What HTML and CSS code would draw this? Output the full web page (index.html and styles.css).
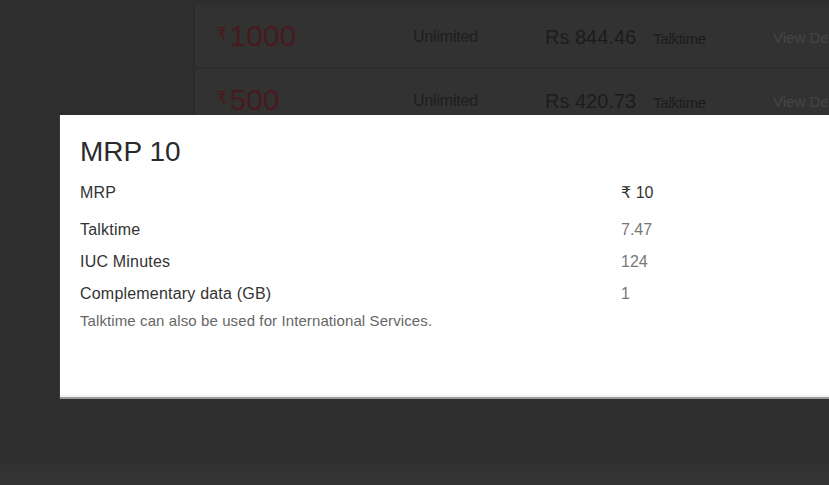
FILE: index.html
```html
<!DOCTYPE html>
<html>
<head>
<meta charset="utf-8">
<link rel="stylesheet" href="styles.css">
</head>
<body>
<div class="page">
  <div class="layout">
    <aside class="side"></aside>
    <main class="plans">
      <div class="plan">
        <div class="price"><span class="rs">₹</span>1000</div>
        <div class="validity">Unlimited</div>
        <div class="talk"><span class="amt">Rs 844.46</span><span class="tt">Talktime</span></div>
        <div class="view">View Details</div>
      </div>
      <div class="plan">
        <div class="price"><span class="rs">₹</span>500</div>
        <div class="validity">Unlimited</div>
        <div class="talk"><span class="amt">Rs 420.73</span><span class="tt">Talktime</span></div>
        <div class="view">View Details</div>
      </div>
    </main>
  </div>
  <div class="footer"></div>

  <div class="modal">
    <h2 class="title">MRP 10</h2>
    <div class="row first"><span class="label">MRP</span><span class="value dark">₹ 10</span></div>
    <div class="row"><span class="label">Talktime</span><span class="value">7.47</span></div>
    <div class="row"><span class="label">IUC Minutes</span><span class="value">124</span></div>
    <div class="row"><span class="label">Complementary data (GB)</span><span class="value">1</span></div>
    <p class="note">Talktime can also be used for International Services.</p>
  </div>
</div>
</body>
</html>
```
FILE: styles.css
```css
html, body {
  margin: 0;
  padding: 0;
}
body {
  width: 829px;
  height: 485px;
  overflow: hidden;
  background: #2e2e2e;
  font-family: "Liberation Sans", Arial, "DejaVu Sans", sans-serif;
}
.page {
  position: relative;
  width: 829px;
  height: 485px;
  display: flex;
  flex-direction: column;
}
.layout {
  display: flex;
  height: 465px;
}
.side {
  width: 193px;
  flex: none;
}
.plans {
  flex: 1;
  padding-top: 5px;
  display: flex;
  flex-direction: column;
}
.plan {
  height: 62px;
  display: flex;
  align-items: center;
  background: #323232;
  border-left: 2px solid #2b2b2b;
  border-bottom: 2px solid #2c2c2c;
  padding-left: 21px;
  white-space: nowrap;
  overflow: hidden;
}
.price {
  width: 197px;
  color: #471a1e;
  font-size: 30px;
}
.rs {
  font-family: "DejaVu Sans", sans-serif;
  font-size: 18px;
  vertical-align: 6px;
  margin-right: 2px;
}
.validity {
  width: 132px;
  color: #1e1e1e;
  font-size: 16px;
  letter-spacing: -0.2px;
  padding-top: 2px;
}
.talk {
  width: 228px;
  color: #1c1c1c;
  display: flex;
  align-items: baseline;
  padding-top: 2px;
}
.amt {
  font-size: 20px;
}
.tt {
  font-size: 15px;
  letter-spacing: -0.3px;
  margin-left: 17px;
}
.view {
  color: #454545;
  font-size: 15px;
  padding-top: 2px;
}
.footer {
  height: 20px;
  background: #333333;
  border-top: 1px solid #303030;
}
.modal {
  position: absolute;
  left: 60px;
  top: 115px;
  width: 769px;
  height: 284px;
  box-sizing: border-box;
  padding: 21px 0 0 20px;
  background: #ffffff;
  border-bottom: 2px solid #9a9a9a;
  box-shadow: inset 0 -2px 0 #f2f2f2, -1px 0 0 #3a3a3a;
  color: #333333;
}
.title {
  margin: 0 0 9px;
  font-size: 28px;
  font-weight: 400;
  line-height: 32px;
  color: #2b2b2b;
}
.row {
  display: flex;
  height: 32px;
  line-height: 32px;
  font-size: 16px;
  letter-spacing: 0.2px;
}
.row.first {
  margin-bottom: 5px;
}
.label {
  width: 541px;
  color: #333333;
}
.value {
  color: #777777;
  letter-spacing: 0;
}
.value.dark {
  color: #333333;
  font-size: 16px;
}
.note {
  margin: 1px 0 0;
  font-size: 15px;
  line-height: 20px;
  letter-spacing: 0.1px;
  color: #666666;
}
```
